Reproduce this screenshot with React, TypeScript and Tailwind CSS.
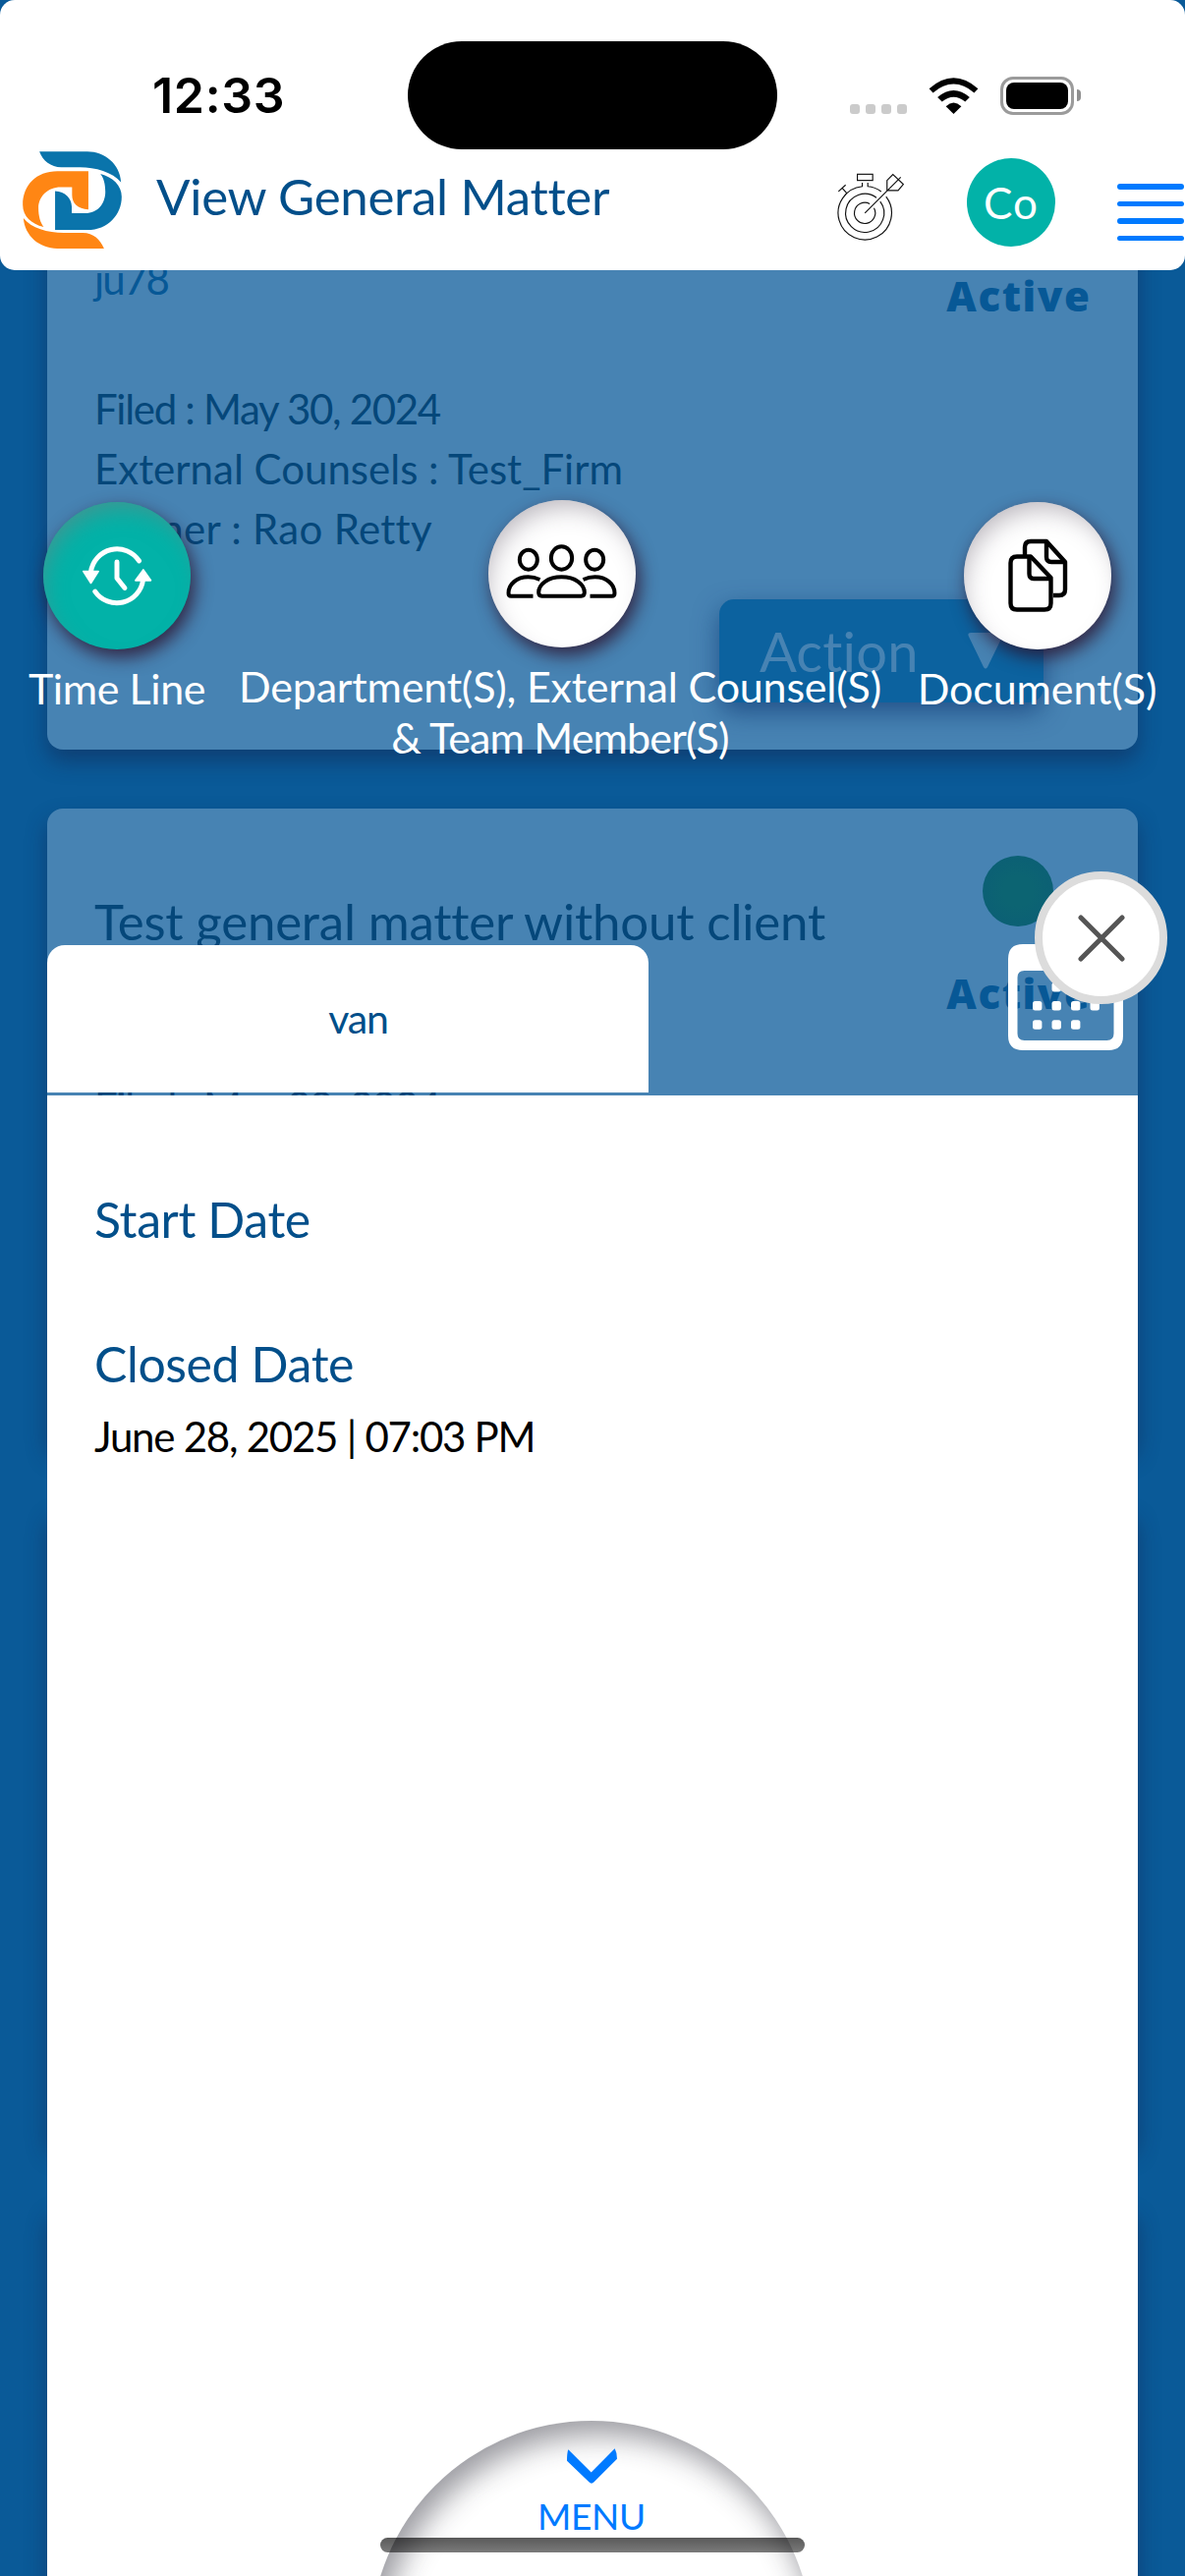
import type { ReactNode } from 'react';
import { clsx } from 'clsx';

interface Matter {
  id: string;
  title?: string;
  client?: string;
  filed?: string;
  counsels?: string;
  owner?: string;
}

interface QuickAction {
  id: string;
  label: ReactNode;
  icon: ReactNode;
  active?: boolean;
  className: string;
}

const matters: Matter[] = [
  {
    id: 'm1',
    client: 'ju78',
    filed: 'May 30, 2024',
    counsels: 'Test_Firm',
    owner: 'Rao Retty',
  },
  {
    id: 'm2',
    title: 'Test general matter without client',
    filed: 'May 30, 2024',
  },
  { id: 'm3' },
  { id: 'm4' },
];

function Logo() {
  return (
    <svg viewBox="24 26 303 298" className="mt-[2px] ml-[23px] h-[99px] w-[101px] shrink-0">
      <g fill="#0a74ab">
        <path d="M75 27H222C275 27 322 65 325 121C300 90 245 75 200 75H142C110 75 85 55 75 27Z" />
        <path d="M123 148C155 150 173 170 174 195V216H215C255 215 277 185 277 150C277 125 272 108 262 95C300 105 327 130 327 165C327 220 285 267 222 267H123Z" />
      </g>
      <g fill="#ff8614">
        <path d="M225 87V204C192 203 175 185 175 160V136H140C100 136 72 165 72 200C72 225 78 245 88 258C50 248 24 225 24 190C24 130 65 87 130 87Z" />
        <path d="M26 231C50 262 100 276 150 276H208C240 276 262 297 273 324H130C75 324 30 285 26 231Z" />
      </g>
    </svg>
  );
}

function TargetIcon() {
  return (
    <svg
      viewBox="215 437 208 208"
      fill="none"
      stroke="#111"
      strokeWidth="3.5"
      className="mt-[24px] ml-[231px] h-[69px] w-[69px] shrink-0"
    >
      <rect x="277" y="441" width="47" height="19" />
      <path d="M292 467V478.4A82 82 0 1 0 365 510" />
      <path d="M309 467V478.4A82 82 0 0 1 350 494" />
      <path d="M335.5 513A59 59 0 1 0 347 524.5" />
      <path d="M315 532A32 32 0 1 0 328 545" />
      <path d="M219 494L241 474M231 484L245 500" />
      <path d="M300 560L410 450M368 460L386 442L418 472L402 491H368Z" />
    </svg>
  );
}

function WifiIcon() {
  return (
    <svg viewBox="496 146 152 113" className="ml-[22px] h-[37px] w-[51px]">
      <path d="M496 180Q572 113 648 180L636 193Q572 139 508 193Z" />
      <path d="M522 207Q572 164 622 207L608 221Q572 191 536 221Z" />
      <path d="M548 235Q572 213 596 235L572 259Z" />
    </svg>
  );
}

function TimelineIcon() {
  return (
    <svg viewBox="144 166 216 184" className="h-[61px] w-[72px]">
      <g fill="none" stroke="#fff" strokeWidth="15" strokeLinecap="round" strokeLinejoin="round">
        <path d="M172 245A81 81 0 0 1 320 211" />
        <path d="M332 270A81 81 0 0 1 185 305" />
        <path d="M252 214V264L276 294" />
      </g>
      <g fill="#fff" stroke="#fff" strokeWidth="5" strokeLinejoin="round">
        <path d="M149 243H195L172 279Z" />
        <path d="M309 271H356L333 238Z" />
      </g>
    </svg>
  );
}

function TeamIcon() {
  return (
    <svg
      viewBox="83 163 338 165"
      fill="none"
      stroke="#000"
      strokeWidth="12"
      className="-mt-[5px] mr-[2px] h-[55px] w-[113px]"
    >
      <ellipse cx="151" cy="210" rx="27" ry="30" />
      <ellipse cx="252" cy="205" rx="32" ry="35" />
      <ellipse cx="353" cy="210" rx="27" ry="30" />
      <path d="M182 310C182 285 210 263 252 263C294 263 322 285 322 310Q322 321 312 321H192Q182 321 182 310Z" />
      <path d="M165 321H98Q90 321 90 312C90 285 115 263 150 263C165 263 175 266 186 271" />
      <path d="M339 321H406Q414 321 414 312C414 285 389 263 354 263C339 263 329 266 318 271" />
    </svg>
  );
}

function DocumentsIcon() {
  return (
    <svg
      viewBox="1024 547 64 78"
      fill="none"
      stroke="#000"
      strokeWidth="4.4"
      strokeLinejoin="round"
      className="h-[78px] w-[64px]"
    >
      <path d="M1035 566.5H1049L1069.5 588V614Q1069.5 620.5 1063 620.5H1035Q1028.5 620.5 1028.5 614V573Q1028.5 566.5 1035 566.5Z" />
      <path d="M1047.5 567V584Q1047.5 589 1052 589H1069.5" />
      <path d="M1043 565V557Q1043 551 1049 551H1065L1084 572V600Q1084 606 1078 606H1072" />
      <path d="M1065 551V567Q1065 572 1070 572H1084" />
    </svg>
  );
}

function CalendarIcon() {
  const dots = [
    [44.5, 39],
    [64, 39],
    [83.5, 39],
    [25, 58],
    [44.5, 58],
    [64, 58],
    [83.5, 58],
    [25, 77.3],
    [44.5, 77.3],
    [64, 77.3],
  ];

  return (
    <svg viewBox="0 0 117 108" fill="#fff" className="-mt-px h-[108px] w-[117px]">
      <path
        fillRule="evenodd"
        d="M15 0H102Q117 0 117 15V93Q117 108 102 108H15Q0 108 0 93V15Q0 0 15 0ZM16.5 27Q9.5 27 9.5 34V91Q9.5 98 16.5 98H100.5Q107.5 98 107.5 91V34Q107.5 27 100.5 27Z"
      />
      {dots.map(([x, y]) => (
        <rect key={`${x}-${y}`} x={x} y={y} width="9.4" height="9.4" rx="2.5" />
      ))}
    </svg>
  );
}

function StatusBar() {
  return (
    <div className="flex h-[152px] items-center pt-[42px]">
      <div className="w-[415px] pl-[155px] font-['Inter',sans-serif] text-[50px] leading-[60px] font-semibold tracking-[0.7px] text-black">
        12:33
      </div>
      <div className="h-[110px] w-[376px] rounded-[55px] bg-black" />
      <div className="ml-[74px] flex items-center">
        <div className="mt-[28px] flex gap-[6px]">
          {[0, 1, 2, 3].map((n) => (
            <span key={n} className="size-[10px] rounded-[3px] bg-[#cbcbcb]" />
          ))}
        </div>
        <WifiIcon />
        <div className="ml-[22px] h-[39px] w-[75px] rounded-[13px] border-3 border-[#9b9b9b] p-[3px]">
          <div className="h-full rounded-[8px] bg-black" />
        </div>
        <div className="ml-[3px] h-[12px] w-[4px] rounded-r-full bg-[#8f8f8f]" />
      </div>
    </div>
  );
}

function Header() {
  return (
    <header className="relative z-10 h-[275px] rounded-[15px] bg-white">
      <StatusBar />
      <div className="flex items-start">
        <Logo />
        <h1 className="mt-[18px] ml-[35px] w-[462px] text-[51px] leading-[60px] tracking-[-0.3px] whitespace-nowrap text-[#024f8a]">
          View General Matter
        </h1>
        <TargetIcon />
        <div className="mt-[9px] ml-[63px] flex size-[90px] shrink-0 items-center justify-center rounded-full bg-[#02b2a8] text-[44px] leading-[60px] tracking-[1px] text-white">
          Co
        </div>
        <button type="button" className="mt-[35px] ml-[63px] flex w-[68px] shrink-0 flex-col gap-[12px]">
          {[0, 1, 2, 3].map((n) => (
            <span key={n} className="h-[5.5px] w-full rounded-full bg-[#007aff]" />
          ))}
        </button>
      </div>
    </header>
  );
}

function MatterCard({ matter }: { matter: Matter }) {
  return (
    <article className="flex h-[650px] flex-col rounded-[16px] bg-[#4783b3] p-12 text-[42px] shadow-[0_12px_22px_rgba(20,30,70,0.45)]">
      <div className="flex h-[225px] shrink-0 justify-between">
        <div className="pt-[38px]">
          <h2 className="h-[57px] text-[51px] leading-[57px] tracking-[-0.2px] text-[#05477a]">
            {matter.title}
          </h2>
          <p className="leading-[56px] tracking-[-1.8px] text-[#075896]">{matter.client}</p>
        </div>
        {(matter.title || matter.client) && (
          <div className="flex w-[148px] flex-col items-center">
            <span className="size-[72px] rounded-full bg-[radial-gradient(circle,#0c6472_30%,#0b5d76_100%)]" />
            <span className="mt-[43px] ml-[2px] font-['Open_Sans',sans-serif] text-[42px] leading-[50px] font-extrabold tracking-[1.6px] text-[#075896]">
              Active
            </span>
          </div>
        )}
      </div>
      {matter.filed && (
        <div className="leading-[61px] whitespace-pre text-[#05477a]">
          <p className="tracking-[-1.3px]">Filed : {matter.filed}</p>
          {matter.counsels && <p>External Counsels : {matter.counsels}</p>}
          {matter.owner && <p className="tracking-[0.3px]">Owner : {matter.owner}</p>}
        </div>
      )}
      {matter.owner && (
        <div className="mt-[41px] mr-12 flex h-[105px] w-[330px] shrink-0 items-center self-end rounded-[15px] bg-[#0c629f] pl-[41px] text-[#4783b3] shadow-[0_10px_26px_rgba(10,50,110,0.6)]">
          <span className="text-[56px] leading-[66px] tracking-[0.2px]">Action</span>
          <svg viewBox="0 0 36 37" className="ml-[50px] h-[37px] w-[36px]" fill="currentColor">
            <path d="M3 0H33Q37 0 35 4L20 35Q18 38 16 35L1 4Q-1 0 3 0Z" />
          </svg>
        </div>
      )}
    </article>
  );
}

const quickActions: QuickAction[] = [
  {
    id: 'timeline',
    label: <span className="tracking-[-0.4px]">Time Line</span>,
    icon: <TimelineIcon />,
    active: true,
    className: 'mt-[2px] ml-[29px] w-[180px]',
  },
  {
    id: 'team',
    label: (
      <div className="-ml-[4px]">
        <p className="tracking-[-0.2px]">Department(S), External Counsel(S)</p>
        <p className="tracking-[-0.85px]">&amp; Team Member(S)</p>
      </div>
    ),
    icon: <TeamIcon />,
    className: 'ml-[36px] w-[654px]',
  },
  {
    id: 'documents',
    label: <span className="tracking-[-0.1px]">Document(S)</span>,
    icon: <DocumentsIcon />,
    className: 'mt-[2px] ml-[36px] w-[241px]',
  },
];

function QuickActions() {
  return (
    <div className="flex h-[453px] shrink-0 items-start">
      {quickActions.map((action) => (
        <div key={action.id} className={clsx('flex shrink-0 flex-col items-center', action.className)}>
          <button
            type="button"
            className={clsx(
              'flex size-[150px] items-center justify-center rounded-full',
              action.active
                ? 'bg-[#02b2a8] shadow-[4px_8px_18px_rgba(45,15,40,0.8),inset_6px_14px_24px_-8px_rgba(110,130,130,0.6)]'
                : 'bg-white shadow-[4px_8px_18px_rgba(45,15,40,0.8),inset_6px_14px_26px_-8px_rgba(60,50,70,0.36)]'
            )}
          >
            {action.icon}
          </button>
          <div className="mt-[14px] text-center text-[43px] leading-[52px] whitespace-nowrap text-white">
            {action.label}
          </div>
        </div>
      ))}
    </div>
  );
}

function Field({ label, value }: { label: string; value?: string }) {
  return (
    <div>
      <dt className="text-[50px] leading-[60px] tracking-[-0.4px] text-[#024f8a]">{label}</dt>
      <dd className="mt-[14px] h-[60px] text-[42px] leading-[60px] tracking-[-1.25px] text-black">
        {value}
      </dd>
    </div>
  );
}

function TimelineSheet() {
  return (
    <section className="absolute inset-0 z-20 flex flex-col pt-[509px]">
      <QuickActions />
      <div className="mx-12 mb-[3px] flex h-[150px] shrink-0 items-start justify-between pr-[15px]">
        <div className="flex h-full w-[612px] items-center justify-center rounded-t-[18px] bg-white pl-[21px] text-[41px] leading-[50px] tracking-[-1.2px] text-[#024f8a]">
          van
        </div>
        <CalendarIcon />
      </div>
      <dl className="mx-12 flex flex-1 flex-col gap-[13px] bg-white pt-[96px] pl-12">
        <Field label="Start Date" />
        <Field label="Closed Date" value="June 28, 2025 | 07:03 PM" />
      </dl>
      <button
        type="button"
        className="absolute top-[887px] right-[18px] flex size-[135px] items-center justify-center rounded-full border-8 border-[#dcdcdc] bg-white"
      >
        <svg viewBox="0 0 48 48" className="size-[48px]" stroke="#555" strokeWidth="5" strokeLinecap="round">
          <path d="M3 3L45 45M45 3L3 45" />
        </svg>
      </button>
    </section>
  );
}

function MenuButton() {
  return (
    <button
      type="button"
      className="absolute top-[2464px] left-[377px] z-30 flex size-[450px] flex-col items-center rounded-full bg-white pt-[28px] text-[#007aff] shadow-[inset_8px_12px_30px_2px_rgba(30,30,45,0.45)]"
    >
      <svg viewBox="651 187 153 107" className="h-[36px] w-[51px]" fill="currentColor">
        <path d="M655 190L725 260L797 187Q804 200 804 219L733 290Q726 297 719 290L651 225Q651 200 655 190Z" />
      </svg>
      <span className="mt-[11px] text-[37px] leading-[44px] tracking-[-0.3px]">MENU</span>
    </button>
  );
}

export default function App() {
  return (
    <div className="relative h-[2622px] w-[1206px] overflow-hidden bg-[#0a5a98] font-['Lato',sans-serif]">
      <Header />
      <main className="-mt-[162px] flex flex-col gap-[60px] px-12">
        {matters.map((matter) => (
          <MatterCard key={matter.id} matter={matter} />
        ))}
      </main>
      <TimelineSheet />
      <MenuButton />
      <div className="absolute top-[2583px] left-[387px] z-40 h-[15px] w-[432px] rounded-full bg-linear-to-b from-black/65 to-black/52" />
    </div>
  );
}
